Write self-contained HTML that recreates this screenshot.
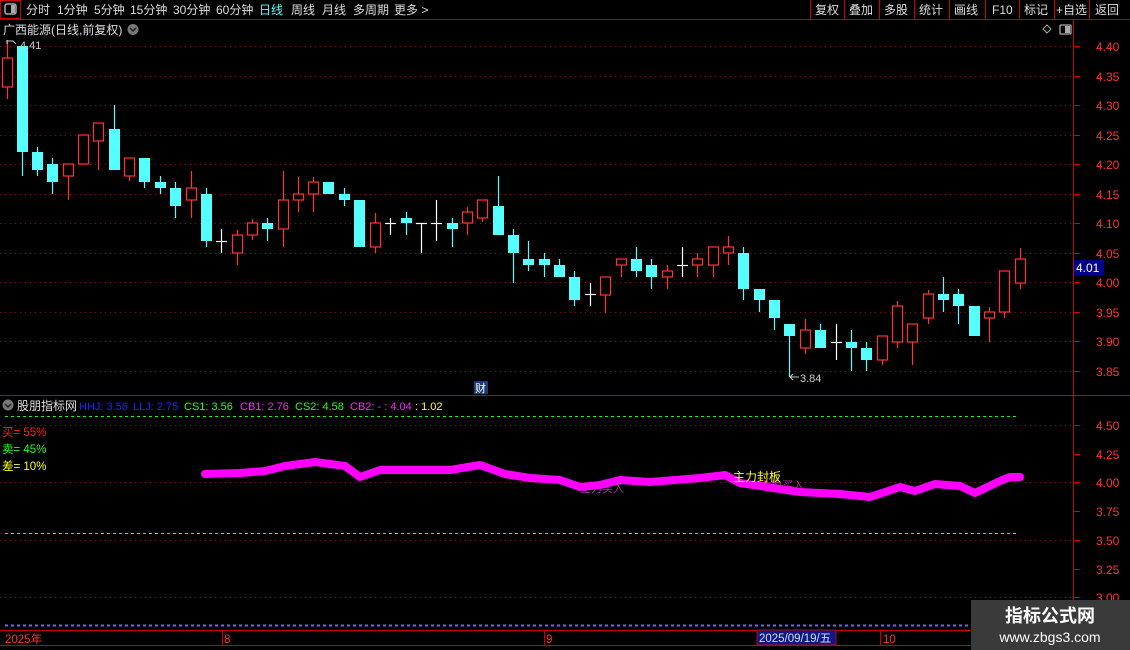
<!DOCTYPE html>
<html><head><meta charset="utf-8"><style>
body{margin:0;width:1130px;height:650px;background:#000;overflow:hidden;font-family:"Liberation Sans","Noto Sans CJK SC",sans-serif;}
svg text{font-family:"Liberation Sans","Noto Sans CJK SC",sans-serif;}
</style></head><body>
<svg width="1130" height="650" xmlns="http://www.w3.org/2000/svg" style="position:absolute;left:0;top:0">
<rect x="0" y="0" width="1130" height="19" fill="#000"/>
<line x1="0" y1="19.5" x2="1130" y2="19.5" stroke="#b00"/>
<rect x="0.5" y="0.5" width="20" height="18" fill="none" stroke="#c00"/>
<rect x="5" y="4" width="11" height="10" rx="2" fill="none" stroke="#aaa" stroke-width="1.5"/><rect x="11" y="5" width="4" height="8" fill="#aaa"/>
<g font-size="12" fill="#ddd">
<text x="26" y="14">分时</text><text x="57" y="14">1分钟</text><text x="94" y="14">5分钟</text><text x="130" y="14">15分钟</text><text x="173" y="14">30分钟</text><text x="216" y="14">60分钟</text>
<text x="259" y="14" fill="#5ff">日线</text><text x="291" y="14">周线</text><text x="322" y="14">月线</text><text x="353" y="14">多周期</text><text x="394" y="14">更多 &gt;</text>
</g>
<g stroke="#c00"><line x1="810.5" y1="0" x2="810.5" y2="19"/><line x1="844.5" y1="0" x2="844.5" y2="19"/><line x1="879.5" y1="0" x2="879.5" y2="19"/><line x1="914.5" y1="0" x2="914.5" y2="19"/><line x1="949.5" y1="0" x2="949.5" y2="19"/><line x1="985.5" y1="0" x2="985.5" y2="19"/><line x1="1019.5" y1="0" x2="1019.5" y2="19"/><line x1="1054.5" y1="0" x2="1054.5" y2="19"/><line x1="1089.5" y1="0" x2="1089.5" y2="19"/></g>
<g font-size="12" fill="#ddd"><text x="815" y="14">复权</text><text x="849" y="14">叠加</text><text x="884" y="14">多股</text><text x="919" y="14">统计</text><text x="954" y="14">画线</text><text x="992" y="14">F10</text><text x="1024" y="14">标记</text><text x="1056" y="14">+自选</text><text x="1095" y="14">返回</text></g>
<text x="3" y="34" font-size="12" fill="#ddd">广西能源(日线,前复权)</text>
<circle cx="133" cy="29.5" r="5.5" fill="#777"/><path d="M130 28l3 3 3-3" stroke="#222" fill="none" stroke-width="1.5"/>
<path d="M1047 25l4 4-4 4-4-4z" fill="none" stroke="#aaa"/>
<rect x="1060" y="25" width="11" height="9" rx="1" fill="none" stroke="#aaa" stroke-width="1.3"/><rect x="1065" y="26" width="5" height="7" fill="#aaa"/>
<line x1="1073.5" y1="20" x2="1073.5" y2="650" stroke="#c00"/>
<line x1="0" y1="395.5" x2="1130" y2="395.5" stroke="#c00"/>
<line x1="0" y1="630.5" x2="1130" y2="630.5" stroke="#c00"/>
<g stroke="#a00" stroke-dasharray="1,4">
<line x1="0" y1="46.5" x2="1073" y2="46.5"/><line x1="0" y1="76.5" x2="1073" y2="76.5"/><line x1="0" y1="105.5" x2="1073" y2="105.5"/><line x1="0" y1="135.5" x2="1073" y2="135.5"/><line x1="0" y1="164.5" x2="1073" y2="164.5"/><line x1="0" y1="194.5" x2="1073" y2="194.5"/><line x1="0" y1="223.5" x2="1073" y2="223.5"/><line x1="0" y1="253.5" x2="1073" y2="253.5"/><line x1="0" y1="282.5" x2="1073" y2="282.5"/><line x1="0" y1="312.5" x2="1073" y2="312.5"/><line x1="0" y1="341.5" x2="1073" y2="341.5"/><line x1="0" y1="371.5" x2="1073" y2="371.5"/>
<line x1="0" y1="425.5" x2="1073" y2="425.5"/><line x1="0" y1="482.5" x2="1073" y2="482.5"/><line x1="0" y1="540.5" x2="1073" y2="540.5"/><line x1="0" y1="597.5" x2="1073" y2="597.5"/>
</g>
<g stroke="#c00">
<line x1="1073" y1="46.5" x2="1080" y2="46.5"/><line x1="1073" y1="76.5" x2="1080" y2="76.5"/><line x1="1073" y1="105.5" x2="1080" y2="105.5"/><line x1="1073" y1="135.5" x2="1080" y2="135.5"/><line x1="1073" y1="164.5" x2="1080" y2="164.5"/><line x1="1073" y1="194.5" x2="1080" y2="194.5"/><line x1="1073" y1="223.5" x2="1080" y2="223.5"/><line x1="1073" y1="253.5" x2="1080" y2="253.5"/><line x1="1073" y1="282.5" x2="1080" y2="282.5"/><line x1="1073" y1="312.5" x2="1080" y2="312.5"/><line x1="1073" y1="341.5" x2="1080" y2="341.5"/><line x1="1073" y1="371.5" x2="1080" y2="371.5"/>
<line x1="1073" y1="425.5" x2="1080" y2="425.5"/><line x1="1073" y1="454.5" x2="1080" y2="454.5"/><line x1="1073" y1="482.5" x2="1080" y2="482.5"/><line x1="1073" y1="511.5" x2="1080" y2="511.5"/><line x1="1073" y1="540.5" x2="1080" y2="540.5"/><line x1="1073" y1="569.5" x2="1080" y2="569.5"/><line x1="1073" y1="597.5" x2="1080" y2="597.5"/>
</g>
<g font-size="12" fill="#f33">
<text x="1096" y="51">4.40</text><text x="1096" y="81">4.35</text><text x="1096" y="110">4.30</text><text x="1096" y="140">4.25</text><text x="1096" y="169">4.20</text><text x="1096" y="199">4.15</text><text x="1096" y="228">4.10</text><text x="1096" y="258">4.05</text><text x="1096" y="287">4.00</text><text x="1096" y="317">3.95</text><text x="1096" y="346">3.90</text><text x="1096" y="376">3.85</text>
<text x="1096" y="430">4.50</text><text x="1096" y="459">4.25</text><text x="1096" y="487">4.00</text><text x="1096" y="516">3.75</text><text x="1096" y="545">3.50</text><text x="1096" y="574">3.25</text><text x="1096" y="602">3.00</text>
</g>
<rect x="1074" y="260" width="30" height="15" fill="#00008b"/><text x="1076" y="272" font-size="12" fill="#fff">4.01</text>
<g stroke="#f33" fill="#000" stroke-width="1.2">
<line x1="7.5" y1="40" x2="7.5" y2="99"/><rect x="2.5" y="58" width="10" height="29"/>
<line x1="68.5" y1="164" x2="68.5" y2="200"/><rect x="63.5" y="164" width="10" height="12"/>
<line x1="83.5" y1="135" x2="83.5" y2="164"/><rect x="78.5" y="135" width="10" height="29"/>
<line x1="98.5" y1="123" x2="98.5" y2="170"/><rect x="93.5" y="123" width="10" height="18"/>
<line x1="129.5" y1="158" x2="129.5" y2="181"/><rect x="124.5" y="158" width="10" height="18"/>
<line x1="191.5" y1="171" x2="191.5" y2="218"/><rect x="186.5" y="188" width="10" height="12"/>
<line x1="237.5" y1="230" x2="237.5" y2="265"/><rect x="232.5" y="235" width="10" height="18"/>
<line x1="252.5" y1="219" x2="252.5" y2="240"/><rect x="247.5" y="223" width="10" height="12"/>
<line x1="283.5" y1="171" x2="283.5" y2="247"/><rect x="278.5" y="200" width="10" height="29"/>
<line x1="298.5" y1="177" x2="298.5" y2="212"/><rect x="293.5" y="194" width="10" height="6"/>
<line x1="313.5" y1="177" x2="313.5" y2="212"/><rect x="308.5" y="182" width="10" height="12"/>
<line x1="375.5" y1="213" x2="375.5" y2="253"/><rect x="370.5" y="223" width="10" height="24"/>
<line x1="467.5" y1="207" x2="467.5" y2="235"/><rect x="462.5" y="212" width="10" height="11"/>
<line x1="482.5" y1="200" x2="482.5" y2="222"/><rect x="477.5" y="200" width="10" height="18"/>
<line x1="605.5" y1="277" x2="605.5" y2="313"/><rect x="600.5" y="277" width="10" height="18"/>
<line x1="621.5" y1="259" x2="621.5" y2="277"/><rect x="616.5" y="259" width="10" height="6"/>
<line x1="667.5" y1="265" x2="667.5" y2="289"/><rect x="662.5" y="271" width="10" height="6"/>
<line x1="697.5" y1="253" x2="697.5" y2="277"/><rect x="692.5" y="259" width="10" height="6"/>
<line x1="713.5" y1="247" x2="713.5" y2="277"/><rect x="708.5" y="247" width="10" height="18"/>
<line x1="728.5" y1="236" x2="728.5" y2="265"/><rect x="723.5" y="247" width="10" height="6"/>
<line x1="805.5" y1="319" x2="805.5" y2="354"/><rect x="800.5" y="330" width="10" height="18"/>
<line x1="882.5" y1="336" x2="882.5" y2="365"/><rect x="877.5" y="336" width="10" height="24"/>
<line x1="897.5" y1="301" x2="897.5" y2="348"/><rect x="892.5" y="306" width="10" height="36"/>
<line x1="912.5" y1="324" x2="912.5" y2="365"/><rect x="907.5" y="324" width="10" height="18"/>
<line x1="928.5" y1="290" x2="928.5" y2="324"/><rect x="923.5" y="294" width="10" height="24"/>
<line x1="989.5" y1="307" x2="989.5" y2="342"/><rect x="984.5" y="312" width="10" height="6"/>
<line x1="1004.5" y1="271" x2="1004.5" y2="318"/><rect x="999.5" y="271" width="10" height="41"/>
<line x1="1020.5" y1="248" x2="1020.5" y2="289"/><rect x="1015.5" y="259" width="10" height="24"/>
</g>
<g stroke="#5ff" fill="#5ff" stroke-width="1.2">
<line x1="22.5" y1="46" x2="22.5" y2="176"/><rect x="17" y="46" width="11" height="106" stroke="none"/>
<line x1="37.5" y1="147" x2="37.5" y2="176"/><rect x="32" y="152" width="11" height="18" stroke="none"/>
<line x1="52.5" y1="158" x2="52.5" y2="194"/><rect x="47" y="164" width="11" height="18" stroke="none"/>
<line x1="114.5" y1="105" x2="114.5" y2="170"/><rect x="109" y="129" width="11" height="41" stroke="none"/>
<line x1="144.5" y1="158" x2="144.5" y2="188"/><rect x="139" y="158" width="11" height="24" stroke="none"/>
<line x1="160.5" y1="176" x2="160.5" y2="194"/><rect x="155" y="182" width="11" height="6" stroke="none"/>
<line x1="175.5" y1="182" x2="175.5" y2="218"/><rect x="170" y="188" width="11" height="18" stroke="none"/>
<line x1="206.5" y1="188" x2="206.5" y2="247"/><rect x="201" y="194" width="11" height="47" stroke="none"/>
<line x1="267.5" y1="218" x2="267.5" y2="241"/><rect x="262" y="223" width="11" height="6" stroke="none"/>
<line x1="328.5" y1="182" x2="328.5" y2="194"/><rect x="323" y="182" width="11" height="12" stroke="none"/>
<line x1="344.5" y1="188" x2="344.5" y2="206"/><rect x="339" y="194" width="11" height="6" stroke="none"/>
<line x1="359.5" y1="200" x2="359.5" y2="247"/><rect x="354" y="200" width="11" height="47" stroke="none"/>
<line x1="406.5" y1="212" x2="406.5" y2="235"/><rect x="401" y="218" width="11" height="5" stroke="none"/>
<line x1="452.5" y1="218" x2="452.5" y2="247"/><rect x="447" y="223" width="11" height="6" stroke="none"/>
<line x1="498.5" y1="176" x2="498.5" y2="235"/><rect x="493" y="206" width="11" height="29" stroke="none"/>
<line x1="513.5" y1="229" x2="513.5" y2="283"/><rect x="508" y="235" width="11" height="18" stroke="none"/>
<line x1="528.5" y1="241" x2="528.5" y2="271"/><rect x="523" y="259" width="11" height="6" stroke="none"/>
<line x1="544.5" y1="253" x2="544.5" y2="277"/><rect x="539" y="259" width="11" height="6" stroke="none"/>
<line x1="559.5" y1="259" x2="559.5" y2="277"/><rect x="554" y="265" width="11" height="12" stroke="none"/>
<line x1="574.5" y1="271" x2="574.5" y2="306"/><rect x="569" y="277" width="11" height="23" stroke="none"/>
<line x1="636.5" y1="247" x2="636.5" y2="277"/><rect x="631" y="259" width="11" height="12" stroke="none"/>
<line x1="651.5" y1="259" x2="651.5" y2="289"/><rect x="646" y="265" width="11" height="12" stroke="none"/>
<line x1="743.5" y1="247" x2="743.5" y2="300"/><rect x="738" y="253" width="11" height="36" stroke="none"/>
<line x1="759.5" y1="289" x2="759.5" y2="312"/><rect x="754" y="289" width="11" height="11" stroke="none"/>
<line x1="774.5" y1="300" x2="774.5" y2="330"/><rect x="769" y="300" width="11" height="18" stroke="none"/>
<line x1="789.5" y1="324" x2="789.5" y2="377"/><rect x="784" y="324" width="11" height="12" stroke="none"/>
<line x1="820.5" y1="324" x2="820.5" y2="348"/><rect x="815" y="330" width="11" height="18" stroke="none"/>
<line x1="851.5" y1="330" x2="851.5" y2="371"/><rect x="846" y="342" width="11" height="6" stroke="none"/>
<line x1="866.5" y1="342" x2="866.5" y2="371"/><rect x="861" y="348" width="11" height="12" stroke="none"/>
<line x1="943.5" y1="277" x2="943.5" y2="312"/><rect x="938" y="294" width="11" height="6" stroke="none"/>
<line x1="958.5" y1="289" x2="958.5" y2="324"/><rect x="953" y="294" width="11" height="12" stroke="none"/>
<line x1="974.5" y1="306" x2="974.5" y2="336"/><rect x="969" y="306" width="11" height="30" stroke="none"/>
</g>
<g stroke="#fff" stroke-width="1.2">
<line x1="221.5" y1="229" x2="221.5" y2="253"/><line x1="216" y1="241.5" x2="227" y2="241.5"/>
<line x1="390.5" y1="218" x2="390.5" y2="235"/><line x1="385" y1="223.5" x2="396" y2="223.5"/>
<line x1="421.5" y1="223" x2="421.5" y2="253"/><line x1="416" y1="223.5" x2="427" y2="223.5"/>
<line x1="436.5" y1="200" x2="436.5" y2="241"/><line x1="431" y1="223.5" x2="442" y2="223.5"/>
<line x1="590.5" y1="283" x2="590.5" y2="306"/><line x1="585" y1="294.5" x2="596" y2="294.5"/>
<line x1="682.5" y1="247" x2="682.5" y2="277"/><line x1="677" y1="265.5" x2="688" y2="265.5"/>
<line x1="836.5" y1="324" x2="836.5" y2="360"/><line x1="831" y1="342.5" x2="842" y2="342.5"/>
</g>
<text x="20" y="49" font-size="11" fill="#ccc">4.41</text><path d="M7 40v4M7 41h6l3 3" stroke="#ccc" fill="none"/>
<text x="800" y="382" font-size="11" fill="#ccc">3.84</text><path d="M790 377h9M790 377l3-3M790 377l3 3" stroke="#ccc" fill="none"/>
<rect x="474" y="381" width="14" height="13" fill="#1a3a7a"/><text x="475" y="392" font-size="11" fill="#fff">财</text>
<circle cx="8" cy="405" r="5.5" fill="#777"/><path d="M5 404l3 3 3-3" stroke="#222" fill="none" stroke-width="1.5"/>
<g font-size="11"><text x="17" y="410" fill="#ddd" font-size="12">股朋指标网</text>
<text x="79" y="410" fill="#22f">HHJ: 3.56</text><text x="133" y="410" fill="#22f">LLJ: 2.75</text>
<text x="184" y="410" fill="#2f2">CS1: 3.56</text><text x="240" y="410" fill="#f2f">CB1: 2.76</text>
<text x="295" y="410" fill="#2f2">CS2: 4.58</text><text x="350" y="410" fill="#f2f">CB2: - : 4.04</text><text x="415" y="410" fill="#ff2">: 1.02</text></g>
<line x1="5" y1="416.5" x2="1018" y2="416.5" stroke="#2e2" stroke-dasharray="3,3"/>
<line x1="5" y1="533.5" x2="1018" y2="533.5" stroke="#6d6" stroke-dasharray="3,3"/>
<line x1="5" y1="625.5" x2="1073" y2="625.5" stroke="#66f" stroke-dasharray="3,3" stroke-width="2"/>
<g font-size="11.5"><text x="2" y="436" fill="#f22">买= 55%</text><text x="2" y="453" fill="#2f2">卖= 45%</text><text x="2" y="470" fill="#ff2">差= 10%</text></g>
<text x="580" y="492" font-size="11" fill="#a3a">主力买入</text>
<text x="760" y="489" font-size="11" fill="#a3a">主力买入</text>
<polyline points="205,474 240,473 265,471 285,466 315,462 345,466 360,477 380,470 450,470 480,465 505,474 530,478 560,480 580,487 600,485 620,480 650,482 700,478 725,475 740,483 780,489 800,492 840,494 870,497 900,487 915,491 935,484 960,486 975,493 1000,481 1010,477 1020,477" fill="none" stroke="#f0f" stroke-width="8" stroke-linejoin="round" stroke-linecap="round"/>
<text x="733" y="481" font-size="12" fill="#ff2">主力封板</text>
<g stroke="#c00"><line x1="222.5" y1="631" x2="222.5" y2="645"/><line x1="544.5" y1="631" x2="544.5" y2="645"/><line x1="880.5" y1="631" x2="880.5" y2="645"/></g>
<g font-size="11.5" fill="#f33"><text x="5" y="643">2025年</text><text x="224" y="643">8</text><text x="546" y="643">9</text><text x="883" y="643">10</text></g>
<rect x="757" y="630" width="79" height="15" fill="#0a1a8a" stroke="#c00"/><text x="759" y="642" font-size="11.5" fill="#ddd">2025/09/19/五</text>
<line x1="0" y1="645.5" x2="1130" y2="645.5" stroke="#c00"/>
<rect x="971" y="600" width="159" height="50" fill="#3a3a3a"/>
<text x="1050" y="622" font-size="18" font-weight="bold" fill="#fff" text-anchor="middle">指标公式网</text>
<text x="1050" y="642" font-size="14" fill="#fff" text-anchor="middle">www.zbgs3.com</text>
</svg>
</body></html>
